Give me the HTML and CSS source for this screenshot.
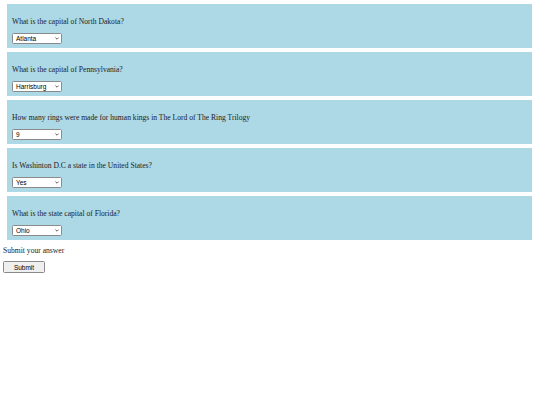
FILE: index.html
```html
<!DOCTYPE html>
<html>
<head>
<meta charset="utf-8">
<link rel="stylesheet" href="styles.css">
</head>
<body>
<form class="quiz">
  <div class="question">
    <p class="prompt">What is the capital of North Dakota?</p>
    <span class="select-wrap">
      <select class="answer"><option>Atlanta</option><option>Bismarck</option></select>
      <svg class="chevron" viewBox="0 0 4 3" width="4" height="3"><path d="M0.4 0.6 L2 2.2 L3.6 0.6" fill="none" stroke="#333" stroke-width="0.8"/></svg>
    </span>
  </div>
  <div class="question">
    <p class="prompt">What is the capital of Pennsylvania?</p>
    <span class="select-wrap">
      <select class="answer"><option>Harrisburg</option><option>Philadelphia</option></select>
      <svg class="chevron" viewBox="0 0 4 3" width="4" height="3"><path d="M0.4 0.6 L2 2.2 L3.6 0.6" fill="none" stroke="#333" stroke-width="0.8"/></svg>
    </span>
  </div>
  <div class="question">
    <p class="prompt">How many rings were made for human kings in The Lord of The Ring Trilogy</p>
    <span class="select-wrap">
      <select class="answer"><option>9</option><option>7</option><option>3</option></select>
      <svg class="chevron" viewBox="0 0 4 3" width="4" height="3"><path d="M0.4 0.6 L2 2.2 L3.6 0.6" fill="none" stroke="#333" stroke-width="0.8"/></svg>
    </span>
  </div>
  <div class="question">
    <p class="prompt">Is Washinton D.C a state in the United States?</p>
    <span class="select-wrap">
      <select class="answer"><option>Yes</option><option>No</option></select>
      <svg class="chevron" viewBox="0 0 4 3" width="4" height="3"><path d="M0.4 0.6 L2 2.2 L3.6 0.6" fill="none" stroke="#333" stroke-width="0.8"/></svg>
    </span>
  </div>
  <div class="question">
    <p class="prompt">What is the state capital of Florida?</p>
    <span class="select-wrap">
      <select class="answer"><option>Ohio</option><option>Tallahassee</option></select>
      <svg class="chevron" viewBox="0 0 4 3" width="4" height="3"><path d="M0.4 0.6 L2 2.2 L3.6 0.6" fill="none" stroke="#333" stroke-width="0.8"/></svg>
    </span>
  </div>
  <p class="submit-label">Submit your answer</p>
  <button type="button" class="submit">Submit</button>
</form>
</body>
</html>
```

FILE: styles.css
```css
html, body {
  margin: 0;
  background: #ffffff;
}
body {
  padding: 4px 8px 0 3px;
  font-family: "Liberation Serif", "Times New Roman", serif;
  font-size: 7.6px;
  color: #222222;
}
.quiz {
  display: flex;
  flex-direction: column;
  align-items: flex-start;
}
.question {
  align-self: stretch;
  background: #add8e6;
  margin: 0 0 4px 4px;
  padding: 4px;
}
.prompt {
  margin: 9px 0 7px 1px;
  line-height: 9px;
}
.select-wrap {
  position: relative;
  display: block;
  width: 50px;
  height: 11px;
  margin-left: 1px;
}
.answer {
  -webkit-appearance: none;
  appearance: none;
  display: block;
  width: 50px;
  height: 11px;
  margin: 0;
  font-family: "Liberation Sans", Arial, sans-serif;
  font-size: 6.5px;
  line-height: 9px;
  padding: 0 0 0 3px;
  border: 1px solid #8a8a8a;
  border-radius: 1.5px;
  background: #ffffff;
  color: #000;
}
.chevron {
  position: absolute;
  right: 3px;
  top: 4px;
  pointer-events: none;
}
.submit-label {
  margin: 2px 0 6px 0;
  line-height: 9px;
}
.submit {
  width: 42px;
  height: 12px;
  padding: 0;
  font-family: "Liberation Sans", Arial, sans-serif;
  font-size: 6.5px;
  background: #efefef;
  border: 1px solid #8a8a8a;
  border-radius: 1.5px;
  color: #000;
}
```
